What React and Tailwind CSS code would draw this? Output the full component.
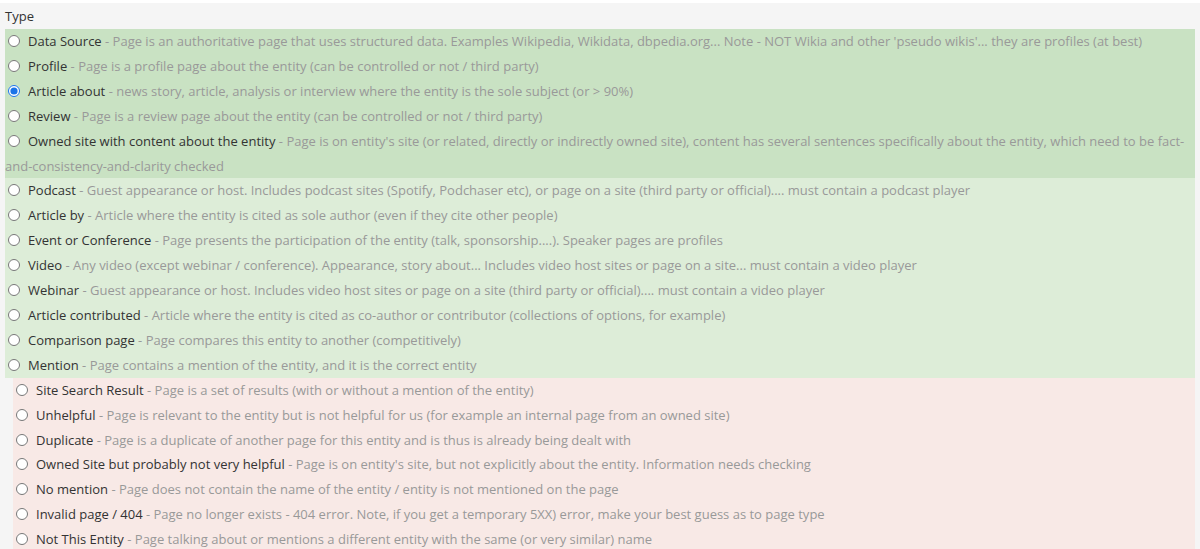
import React from 'react';

const owned = [
  ['Data Source', "Page is an authoritative page that uses structured data. Examples Wikipedia, Wikidata, dbpedia.org... Note - NOT Wikia and other 'pseudo wikis'... they are profiles (at best)"],
  ['Profile', 'Page is a profile page about the entity (can be controlled or not / third party)'],
  ['Article about', 'news story, article, analysis or interview where the entity is the sole subject (or > 90%)', true],
  ['Review', 'Page is a review page about the entity (can be controlled or not / third party)'],
  ['Owned site with content about the entity', "Page is on entity's site (or related, directly or indirectly owned site), content has several sentences specifically about the entity, which need to be fact-and-consistency-and-clarity checked"],
];

const mentions = [
  ['Podcast', 'Guest appearance or host. Includes podcast sites (Spotify, Podchaser etc), or page on a site (third party or official).... must contain a podcast player'],
  ['Article by', 'Article where the entity is cited as sole author (even if they cite other people)'],
  ['Event or Conference', 'Page presents the participation of the entity (talk, sponsorship....). Speaker pages are profiles'],
  ['Video', 'Any video (except webinar / conference). Appearance, story about... Includes video host sites or page on a site... must contain a video player'],
  ['Webinar', 'Guest appearance or host. Includes video host sites or page on a site (third party or official).... must contain a video player'],
  ['Article contributed', 'Article where the entity is cited as co-author or contributor (collections of options, for example)'],
  ['Comparison page', 'Page compares this entity to another (competitively)'],
  ['Mention', 'Page contains a mention of the entity, and it is the correct entity'],
];

const rejects = [
  ['Site Search Result', 'Page is a set of results (with or without a mention of the entity)'],
  ['Unhelpful', 'Page is relevant to the entity but is not helpful for us (for example an internal page from an owned site)'],
  ['Duplicate', 'Page is a duplicate of another page for this entity and is thus is already being dealt with'],
  ['Owned Site but probably not very helpful', "Page is on entity's site, but not explicitly about the entity. Information needs checking"],
  ['No mention', 'Page does not contain the name of the entity / entity is not mentioned on the page'],
  ['Invalid page / 404', 'Page no longer exists - 404 error. Note, if you get a temporary 5XX) error, make your best guess as to page type'],
  ['Not This Entity', 'Page talking about or mentions a different entity with the same (or very similar) name'],
];

function Option({ label, desc, checked }) {
  return (
    <div>
      <label>
        <input
          type="radio"
          name="type"
          defaultChecked={checked}
          className="w-[12px] h-[12px] ml-[3px] mr-[8px] align-[-1px] accent-[#1a73e8]"
        />
        <span className="text-[#333]">{label}</span>
        <span className="text-[#999]"> - {desc}</span>
      </label>
    </div>
  );
}

export default function App() {
  return (
    <div className="min-h-screen bg-[#f5f5f5] border-t-[3px] border-white font-['Open_Sans',sans-serif] text-[13px] leading-[24.9px]">
      <div className="pl-[5px] pt-[1px] h-[26px] leading-[24px] text-[#333]">Type</div>
      <div className="pl-[5px] pr-[5px]">
        <div className="bg-[#c9e2c3]">
          {owned.map(([l, d, c]) => (
            <Option key={l} label={l} desc={d} checked={c} />
          ))}
        </div>
        <div className="bg-[#ddedd8]">
          {mentions.map(([l, d]) => (
            <Option key={l} label={l} desc={d} />
          ))}
        </div>
      </div>
      <div className="pl-[13px] pr-[5px]">
        <div className="bg-[#f8e9e6]">
          {rejects.map(([l, d]) => (
            <Option key={l} label={l} desc={d} />
          ))}
        </div>
      </div>
    </div>
  );
}
